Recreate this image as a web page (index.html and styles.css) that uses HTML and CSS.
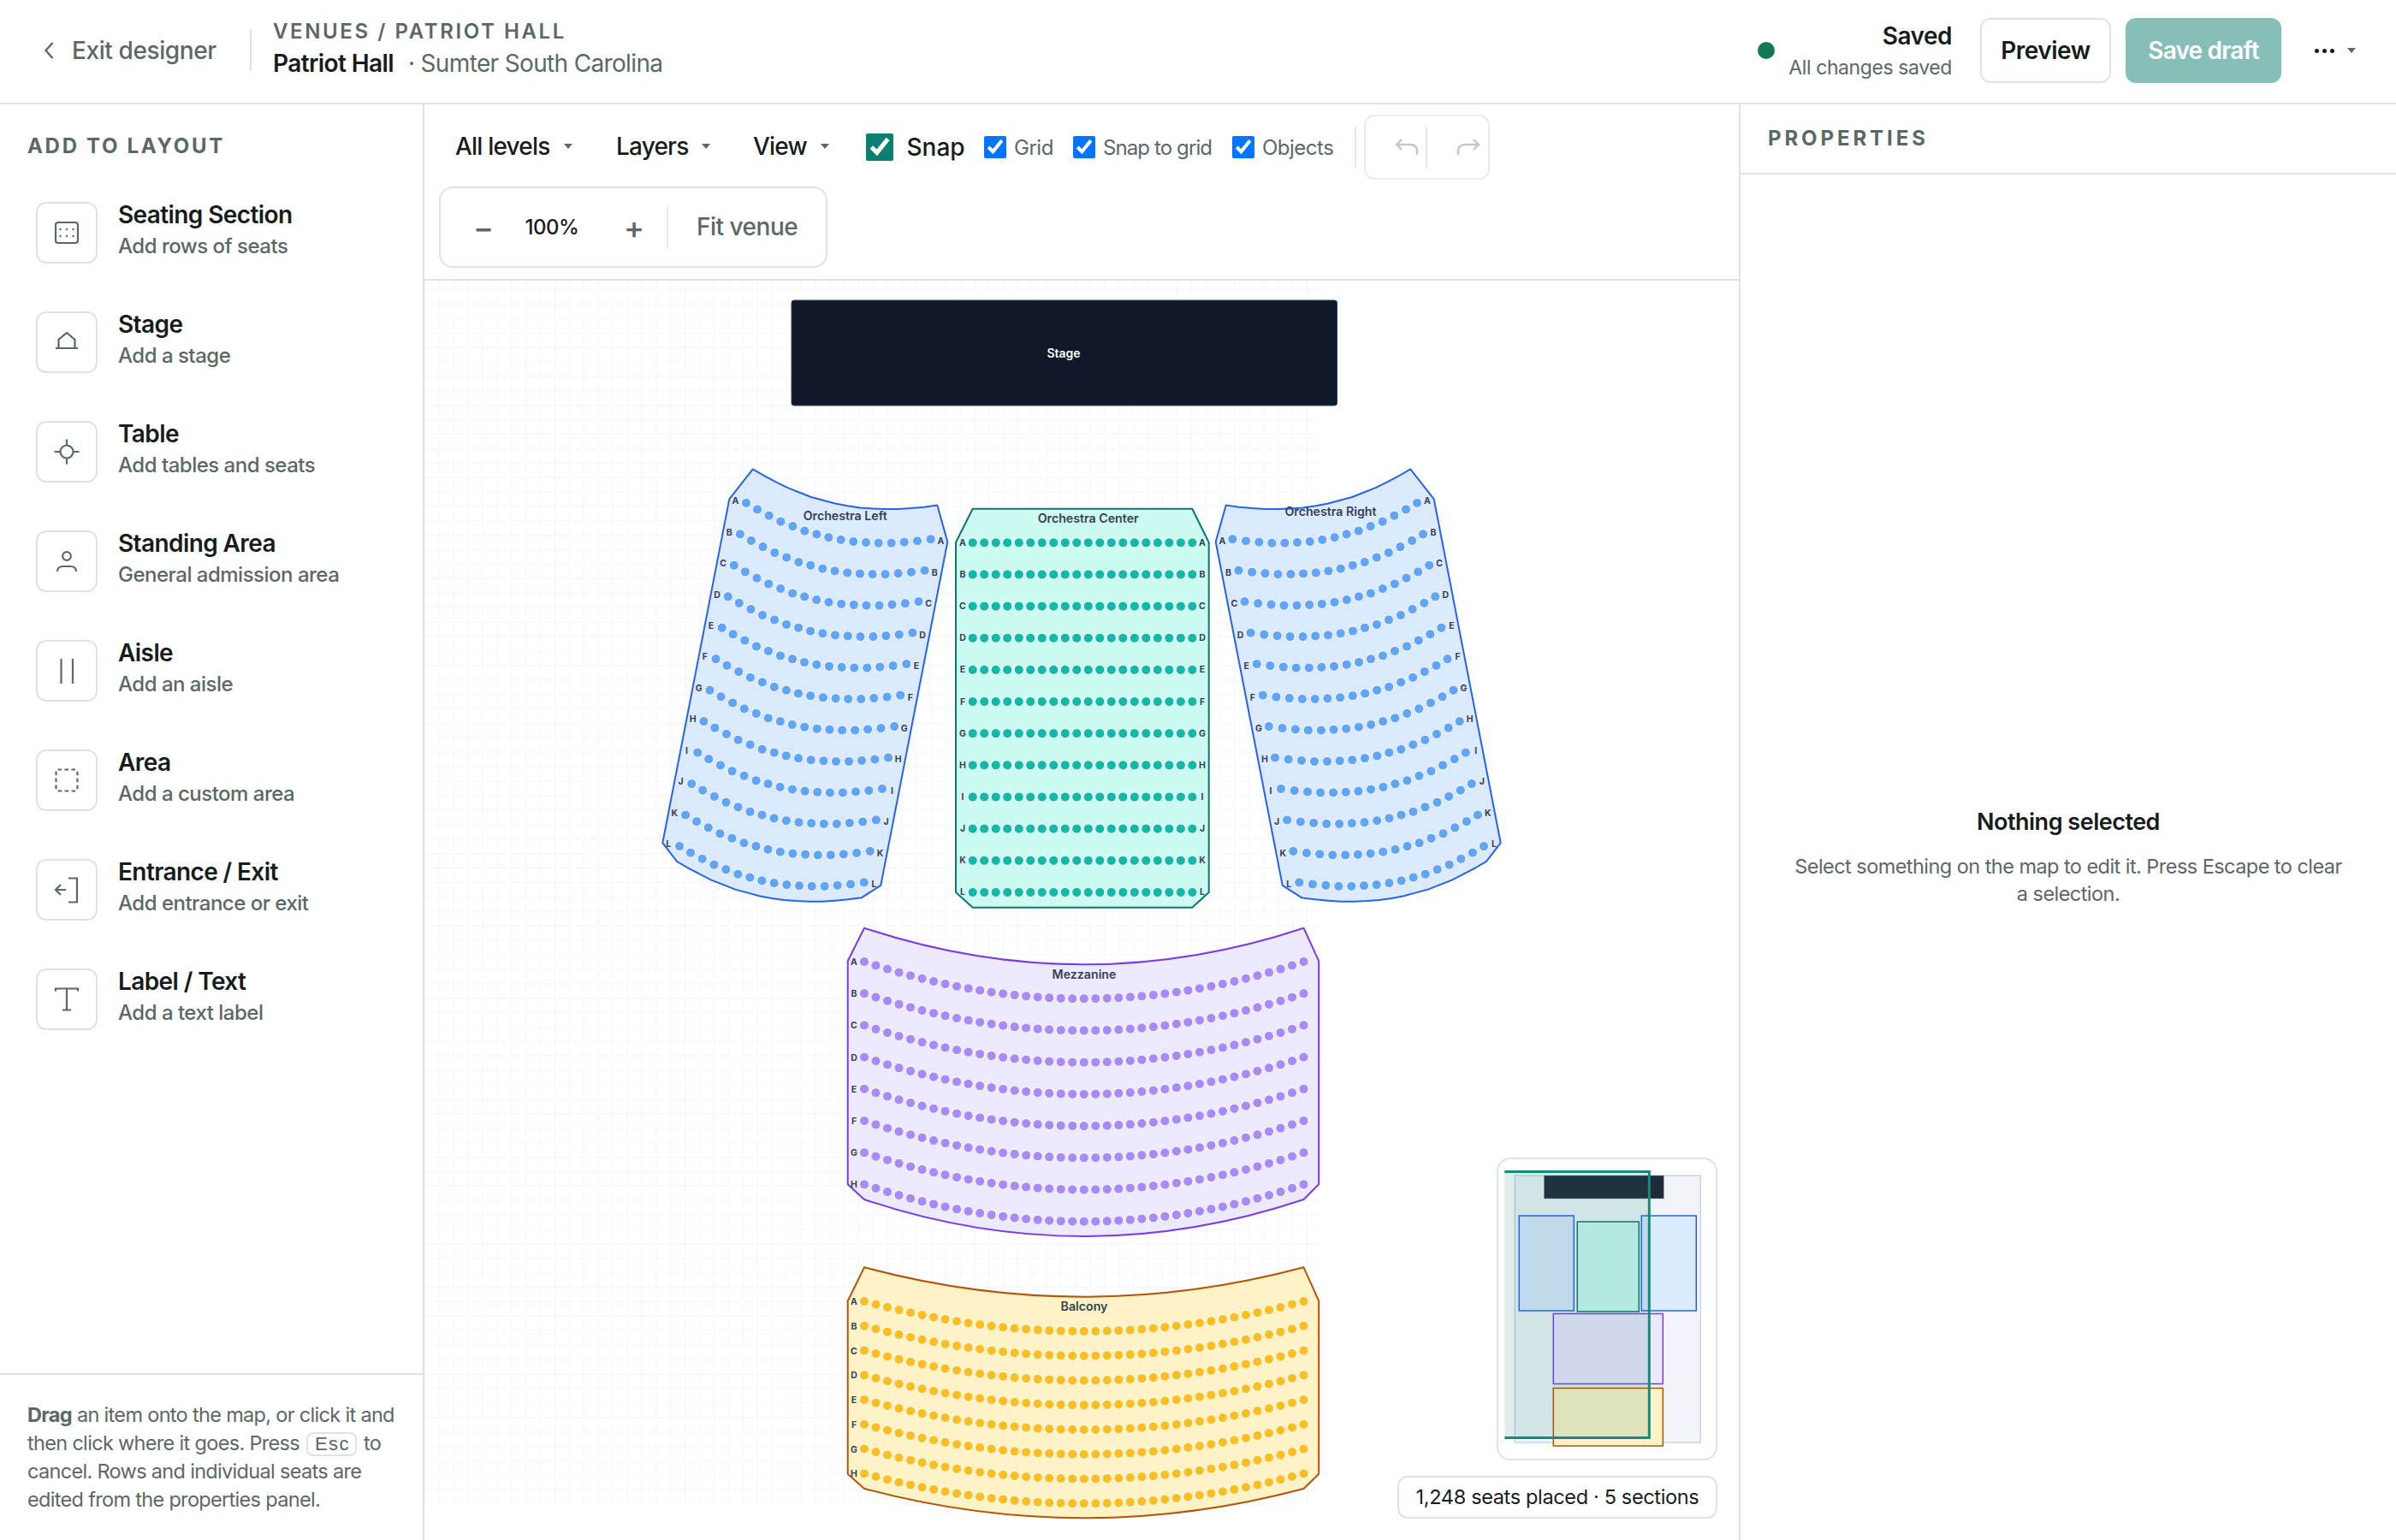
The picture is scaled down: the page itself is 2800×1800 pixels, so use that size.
FILE: index.html
```html
<!DOCTYPE html>
<html lang="en">
<head>
<meta charset="utf-8">
<title>Patriot Hall designer</title>
<link rel="stylesheet" href="styles.css">
</head>
<body>
<header class="topbar">
  <a class="exit">
    <svg class="chev" viewBox="0 0 14 24"><path d="M11.5 3L3.5 12L11.5 21"/></svg>
    <span>Exit designer</span>
  </a>
  <div class="crumbs">
    <div class="crumb-path">VENUES / PATRIOT HALL</div>
    <div class="crumb-name"><strong>Patriot Hall</strong><span class="place">· Sumter South Carolina</span></div>
  </div>
  <div class="top-right">
    <span class="dot"></span>
    <div class="status"><div class="status-main">Saved</div><div class="status-sub">All changes saved</div></div>
    <button class="btn btn-ghost">Preview</button>
    <button class="btn btn-save">Save draft</button>
    <div class="more"><span class="dots"><i></i><i></i><i></i></span><span class="caret"></span></div>
  </div>
</header>
<main class="body">
  <aside class="left">
    <h2 class="left-title">ADD TO LAYOUT</h2>
    <ul class="items">
      <li class="item"><span class="ico"><svg viewBox="0 0 36 36"><rect x="5" y="6" width="26" height="24" rx="3"/><g class="dotset"><circle cx="10.5" cy="14" r="1.2"/><circle cx="18" cy="14" r="1.2"/><circle cx="25.5" cy="14" r="1.2"/><circle cx="10.5" cy="22" r="1.2"/><circle cx="18" cy="22" r="1.2"/><circle cx="25.5" cy="22" r="1.2"/></g></svg></span><div><div class="it">Seating Section</div><div class="is">Add rows of seats</div></div></li>
      <li class="item"><span class="ico"><svg viewBox="0 0 36 36"><path d="M8.5 24.5V15L18 7L27.5 15V24.5M5 25H31"/></svg></span><div><div class="it">Stage</div><div class="is">Add a stage</div></div></li>
      <li class="item"><span class="ico"><svg viewBox="0 0 36 36"><circle cx="18" cy="18" r="7.5"/><path d="M18 3.5V10.5M18 25.5V32.5M3.5 18H10.5M25.5 18H32.5"/></svg></span><div><div class="it">Table</div><div class="is">Add tables and seats</div></div></li>
      <li class="item"><span class="ico"><svg viewBox="0 0 36 36"><circle cx="18" cy="12" r="4.8"/><path d="M7 30Q7 24 14 24H22Q29 24 29 30"/></svg></span><div><div class="it">Standing Area</div><div class="is">General admission area</div></div></li>
      <li class="item"><span class="ico"><svg viewBox="0 0 36 36"><path d="M11.5 4V33M25 4V33"/></svg></span><div><div class="it">Aisle</div><div class="is">Add an aisle</div></div></li>
      <li class="item"><span class="ico"><svg viewBox="0 0 36 36"><rect class="dash" x="5.5" y="5.5" width="25" height="25" rx="2"/></svg></span><div><div class="it">Area</div><div class="is">Add a custom area</div></div></li>
      <li class="item"><span class="ico"><svg viewBox="0 0 36 36"><path d="M20 4.5H30V32.5H20M17 18H5M11 12L5 18L11 24"/></svg></span><div><div class="it">Entrance / Exit</div><div class="is">Add entrance or exit</div></div></li>
      <li class="item"><span class="ico"><svg viewBox="0 0 36 36"><path d="M5 8.5V5.5H31V8.5M18 5.5V30.5M13 30.5H23"/></svg></span><div><div class="it">Label / Text</div><div class="is">Add a text label</div></div></li>
    </ul>
    <div class="hint"><b>Drag</b> an item onto the map, or click it and then click where it goes. Press <kbd>Esc</kbd> to cancel. Rows and individual seats are edited from the properties panel.</div>
  </aside>
  <section class="center">
    <div class="toolbar">
      <div class="tool-row">
        <button class="dd">All levels<span class="caret"></span></button>
        <button class="dd">Layers<span class="caret"></span></button>
        <button class="dd">View<span class="caret"></span></button>
        <label class="chk chk-main"><input type="checkbox" checked>Snap</label>
        <label class="chk"><input type="checkbox" checked>Grid</label>
        <label class="chk chk-tight"><input type="checkbox" checked>Snap to grid</label>
        <label class="chk"><input type="checkbox" checked>Objects</label>
        <span class="vsep"></span>
        <div class="hist">
          <button class="hist-btn"><svg viewBox="0 0 30 30"><path d="M9 6L3 12L9 18M3 12H18Q27 12 27 19V24"/></svg></button>
          <button class="hist-btn"><svg viewBox="0 0 30 30"><path d="M21 6L27 12L21 18M27 12H12Q3 12 3 19V24"/></svg></button>
        </div>
      </div>
      <div class="zoombox">
        <span class="zb zb-minus">−</span>
        <span class="zb-val">100%</span>
        <span class="zb zb-plus">+</span>
        <span class="zb-sep"></span>
        <span class="zb-fit">Fit venue</span>
      </div>
    </div>
    <div class="canvas">
      <svg id="map" class="map" viewBox="496 328 1536 1472" width="1536" height="1472">
        <defs>
          <pattern id="gridp" x="496" y="338" width="16.9" height="16.9" patternUnits="userSpaceOnUse">
            <path class="gridline" d="M0.5 0V16.9M0 0.5H16.9"/>
          </pattern>
        </defs>
        <rect class="gridfill" x="496" y="328" width="1045.5" height="1430"/>
        <g id="layer"></g>
      </svg>
      <svg class="minimap" viewBox="1751 1355 254 350" width="254" height="350">
        <rect class="m-bg" x="1770" y="1374" width="217" height="312"/>
        <rect class="m-stage" x="1804" y="1374" width="140" height="27"/>
        <rect class="m-blue" x="1775" y="1421" width="64" height="111"/>
        <rect class="m-teal" x="1843" y="1428" width="72" height="105"/>
        <rect class="m-blue" x="1918" y="1421" width="64" height="111"/>
        <rect class="m-purple" x="1815" y="1535.5" width="128" height="82"/>
        <rect class="m-amber" x="1815" y="1622.5" width="128" height="67.5"/>
        <rect class="m-view-fill" x="1758" y="1369.5" width="169" height="311"/>
        <path class="m-view" d="M1758 1369.5H1927V1680.5H1758"/>
      </svg>
      <div class="pill">1,248 seats placed · 5 sections</div>
    </div>
  </section>
  <aside class="right">
    <h2 class="right-title">PROPERTIES</h2>
    <div class="empty">
      <div class="empty-title">Nothing selected</div>
      <p class="empty-text">Select something on the map to edit it. Press Escape to clear a selection.</p>
    </div>
  </aside>
</main>
<script src="app.js"></script>
</body>
</html>
```
FILE: styles.css
```css
*{box-sizing:border-box}
html,body{margin:0;padding:0;height:100%}
body{width:2800px;height:1800px;overflow:hidden;background:#fff;color:#161c1c;font-family:Inter,"Liberation Sans",sans-serif;display:flex;flex-direction:column}
button{font:inherit;color:inherit;background:none;border:0;padding:0}
h2,p,ul{margin:0;padding:0}
li{list-style:none}

.topbar{height:122px;flex:none;border-bottom:2px solid #dfe3e3;display:flex;align-items:center;padding:0 30px 2px 50px}
.exit{display:flex;align-items:center;color:#5b6865;font-size:28px;font-weight:500;letter-spacing:-.4px;width:244px;height:48px;border-right:2px solid #dfe3e3}
.chev{width:14px;height:24px;margin-right:20px;fill:none;stroke:#5b6865;stroke-width:2.4}
.crumbs{margin:0 0 6px 25px}
.crumb-path{font-size:24px;font-weight:600;letter-spacing:2.6px;color:#5b6865;line-height:30px;margin-bottom:5px}
.crumb-name{font-size:28px;line-height:34px;letter-spacing:-.6px}
.crumb-name strong{font-weight:600}
.place{color:#5b6865;margin-left:17px;letter-spacing:-.65px}
.top-right{margin-left:auto;display:flex;align-items:center}
.dot{width:20px;height:20px;border-radius:50%;background:#0f7b56;margin-right:13px}
.status{text-align:right;margin-right:33px;width:194px;white-space:nowrap;padding-top:2px}
.status-main{font-size:28px;font-weight:600;line-height:38px;letter-spacing:-.5px}
.status-sub{font-size:23px;color:#5b6865;line-height:36px;letter-spacing:-.4px}
.btn{height:76px;border-radius:12px;font-size:28px;font-weight:600;letter-spacing:-.5px}
.btn-ghost{width:153px;border:2px solid #dfe3e3;background:#fff;margin-right:17px}
.btn-save{width:182px;background:#85bfb7;color:#fff;letter-spacing:-.8px}
.more{display:flex;align-items:center;margin-left:39px;width:65px}
.dots{display:flex;gap:4px}
.dots i{width:5px;height:5px;border-radius:50%;background:#161c1c}
.caret{display:inline-block;flex:none;width:0;height:0;border-left:5px solid transparent;border-right:5px solid transparent;border-top:6px solid #5b6865}
.more .caret{margin-left:15px}

.body{flex:1;display:flex;min-height:0}
.left{width:496px;flex:none;border-right:2px solid #dfe3e3;display:flex;flex-direction:column}
.left-title{font-size:24px;font-weight:700;letter-spacing:2.7px;color:#5b6865;padding:34px 0 0 32px;line-height:30px}
.items{padding:50px 0 0 42px;flex:1}
.item{display:flex;height:128px;gap:24px}
.ico{width:72px;height:72px;border:2px solid #dfe3e3;border-radius:12px;display:flex;align-items:center;justify-content:center}
.ico svg{width:36px;height:36px;fill:none;stroke:#5b6865;stroke-width:2.2}
.dotset circle{fill:#5b6865;stroke:none}
.dash{stroke-dasharray:4.5 3.5}
.it{font-size:28px;font-weight:600;line-height:34px;letter-spacing:-.6px;margin-top:-2px}
.is{font-size:24px;font-weight:500;color:#5b6865;line-height:36px;letter-spacing:-.5px;margin-top:2px}
.hint{border-top:2px solid #dfe3e3;height:195px;padding:29.5px 20px 0 32px;font-size:23.5px;line-height:33px;color:#5b6865;letter-spacing:-.68px}
.hint b{font-weight:700}
kbd{display:inline-block;font-family:"Liberation Sans",sans-serif;font-size:22px;letter-spacing:1.5px;line-height:24px;border:2px solid #dfe3e3;border-radius:8px;padding:0 6px 0 8px;margin:0 2px}

.center{width:1536px;flex:none;display:flex;flex-direction:column}
.toolbar{flex:none;height:206px;border-bottom:2px solid #dfe3e3;padding:12px 0 0 17px}
.tool-row{height:76px;display:grid;grid-template-columns:188px 160px 131.5px 138.5px 104px 186px 143px 10.6px 147px;align-items:center;margin-bottom:8px;padding-left:19px;white-space:nowrap}
.dd{display:flex;align-items:center;gap:16px;font-size:28px;font-weight:500;letter-spacing:-.8px;text-align:left;padding-bottom:3px}
.chk{display:flex;align-items:center;font-size:24px;color:#5b6865;letter-spacing:-.5px}
.chk-tight{letter-spacing:-.9px}
.chk input{width:26px;height:26px;margin:0 9px 0 0;flex:none}
.chk-main{font-size:28px;font-weight:500;color:#161c1c;letter-spacing:0}
.chk-main input{width:32px;height:32px;margin:0 16px 0 0;accent-color:#0b7f70}
.vsep{width:2px;height:48px;background:#e4e7e7}
.hist{display:flex;align-items:center;width:147px;height:76px;border:2px solid #e9ecec;border-radius:12px}
.hist-btn{flex:1;height:48px;display:flex;align-items:center;justify-content:center;padding-left:26px}
.hist-btn+.hist-btn{border-left:2px solid #e4e7e7}
.hist-btn svg{width:30px;height:30px;fill:none;stroke:#c3c7c7;stroke-width:2.4}
.zoombox{width:454px;height:95px;border:2px solid #dfe3e3;border-radius:16px;display:flex;align-items:center}
.zb{font-size:36px;color:#5b6865;width:30px;text-align:center;font-weight:500}
.zb-minus{margin-left:35px}
.zb-val{font-size:24px;font-weight:500;width:130px;text-align:center;letter-spacing:-.5px}
.zb-plus{margin-left:16px}
.zb-sep{width:2px;height:48px;background:#e4e7e7;margin-left:23px}
.zb-fit{font-size:28px;font-weight:500;color:#5b6865;margin-left:33px;letter-spacing:-.5px;padding-bottom:2px}

.canvas{flex:1;position:relative;overflow:hidden}
.map{position:absolute;left:0;top:0}
.gridfill{fill:url(#gridp)}
.gridline{fill:none;stroke:#f3f6fc;stroke-width:1}
.sec{stroke-width:2;stroke-linejoin:round}
.sec-blue{fill:#dbeafe;stroke:#2563eb}
.sec-teal{fill:#ccfbf1;stroke:#0f766e}
.sec-purple{fill:#ede9fe;stroke:#7c3aed}
.sec-amber{fill:#fef3c7;stroke:#b45309}
.seat{stroke:#fff;stroke-width:1}
.seat-blue{fill:#60a5fa}
.seat-teal{fill:#14b8a6}
.seat-purple{fill:#a78bfa}
.seat-amber{fill:#fbbf24}
.rowline{fill:none;stroke:#374151;stroke-width:.5;opacity:.15}
.stage{fill:#111827;stroke:#334155;stroke-width:1}
.stage-t{fill:#fff;font-size:14px;font-weight:600;text-anchor:middle;dominant-baseline:central}
.sec-title{fill:#374151;font-size:14.2px;font-weight:600;text-anchor:middle;dominant-baseline:central}
.row-l{fill:#374151;font-size:10.5px;font-weight:700;text-anchor:middle;dominant-baseline:central}

.minimap{position:absolute;left:1252.7px;top:1024.7px;width:258.6px;height:354px;background:#fff;border:2px solid #dfe3e3;border-radius:16px}
.m-bg{fill:#f1f5f9;stroke:#cbd5e1;stroke-width:1.5}
.m-stage{fill:#1f2937;stroke:#94a3b8;stroke-width:.5}
.m-blue{fill:#dbeafe;stroke:#2563eb;stroke-width:1.5}
.m-teal{fill:#ccfbf1;stroke:#0f766e;stroke-width:1.5}
.m-purple{fill:#ede9fe;stroke:#7c3aed;stroke-width:1.5}
.m-amber{fill:#fef3c7;stroke:#b45309;stroke-width:1.5}
.m-view-fill{fill:#0f766e;fill-opacity:.13}
.m-view{fill:none;stroke:#148c7d;stroke-width:3}
.pill{position:absolute;left:1136.7px;top:1396.7px;width:374.6px;height:50px;border:2px solid #dfe3e3;border-radius:12px;background:#fff;font-size:23.5px;line-height:46px;text-align:center;letter-spacing:-.35px;white-space:nowrap}

.right{width:768px;flex:none;border-left:2px solid #dfe3e3;display:flex;flex-direction:column}
.right-title{height:82px;border-bottom:2px solid #dfe3e3;font-size:24px;font-weight:700;letter-spacing:3.9px;color:#5b6865;padding:25px 0 0 32px;line-height:30px}
.empty{flex:1;display:flex;flex-direction:column;align-items:center;justify-content:center;text-align:center;padding:0 60px 0}
.empty-title{font-size:27px;font-weight:600;letter-spacing:-.5px;line-height:40px;margin-bottom:16px;margin-top:-3px}
.empty-text{font-size:23.5px;line-height:32px;color:#5b6865;letter-spacing:-.55px;max-width:645px}
```
FILE: app.js
```js
(function () {
  var NS = 'http://www.w3.org/2000/svg';
  var layer = document.getElementById('layer');
  var LETTERS = 'ABCDEFGHIJKL';

  function el(tag, attrs, text) {
    var n = document.createElementNS(NS, tag);
    for (var k in attrs) n.setAttribute(k, attrs[k]);
    if (text) n.textContent = text;
    layer.appendChild(n);
    return n;
  }
  function pts(list) {
    return list.map(function (p) { return p[0].toFixed(1) + ',' + p[1].toFixed(1); }).join(' ');
  }
  function seat(x, y, tone) { el('circle', { cx: x.toFixed(2), cy: y.toFixed(2), r: 5.6, 'class': 'seat seat-' + tone }); }
  function label(x, y, t) { el('text', { x: x.toFixed(1), y: y.toFixed(1), 'class': 'row-l' }, t); }
  function title(x, y, t) { el('text', { x: x, y: y, 'class': 'sec-title' }, t); }

  /* stage */
  el('rect', { x: 925, y: 351, width: 637.5, height: 123, rx: 3, 'class': 'stage' });
  el('text', { x: 1243, y: 412, 'class': 'stage-t' }, 'Stage');

  /* orchestra wings: measured row A of the left wing, other rows are translated copies */
  var rawX = [336, 375, 416, 457, 499, 541, 583, 625, 668, 712, 756, 800, 845, 890, 936, 983];
  var rawY = [168, 190, 211, 231, 247, 263, 274, 285, 293, 299, 302, 304, 304, 301, 297, 291];
  var rowA = rawX.map(function (x, i) { return [760 + x / 3, 530 + rawY[i] / 2.904]; });
  var DX = -7.09, DY = 36.47, MIRROR = 2528;

  function wing(mirror, titleX, titleY, name) {
    var map = function (p) { return mirror ? [MIRROR - p[0], p[1]] : p; };
    var top = rowA.map(function (p) { return [p[0] + 7.67, p[1] - 39.6]; });
    var bot = rowA.map(function (p) { return [p[0] + DX * 11 - 3, p[1] + DY * 11 + 17.9]; });
    var outline = top.concat([[1107.3, 633.3], [1029.3, 1034.8]], bot.slice().reverse(), [[774.3, 985.2], [852.3, 583.4]]);
    el('polygon', { points: pts(outline.map(map)), 'class': 'sec sec-blue' });
    for (var r = 0; r < 12; r++) {
      var row = rowA.map(function (p) { return map([p[0] + DX * r, p[1] + DY * r]); });
      el('polyline', { points: pts(row), 'class': 'rowline' });
      row.forEach(function (p) { seat(p[0], p[1], 'blue'); });
      /* row[0] is the outer, raised end of the wing; row[15] the inner end */
      var outerSide = mirror ? 12 : -12.7;
      var innerSide = mirror ? -12 : 11.7;
      label(row[0][0] + outerSide, row[0][1] - 2.3, LETTERS[r]);
      label(row[15][0] + innerSide, row[15][1] + 2.4, LETTERS[r]);
    }
    title(titleX, titleY, name);
  }
  wing(false, 987.7, 602, 'Orchestra Left');
  wing(true, 1555, 597.8, 'Orchestra Right');

  /* orchestra centre */
  el('polygon', { points: '1136.7,594.7 1393.3,594.7 1412.7,634 1412.7,1043 1393.3,1060.7 1136.7,1060.7 1117,1043 1117,634', 'class': 'sec sec-teal' });
  for (var r = 0; r < 12; r++) {
    var y = 634.3 + r * 37.15;
    for (var i = 0; i < 20; i++) seat(1136.7 + i * 13.507, y, 'teal');
    label(1125, y, LETTERS[r]);
    label(1405, y, LETTERS[r]);
  }
  title(1271.7, 605, 'Orchestra Center');

  /* curved blocks */
  function bowl(o) {
    var L = 1010, R = 1523.5, mid = (L + R) / 2, a = 990.7, b = 1541.2;
    var d = 'M' + L + ' ' + o.topY +
      ' Q' + mid + ' ' + (2 * o.topMid - o.topY) + ' ' + R + ' ' + o.topY +
      ' L' + b + ' ' + o.sideTop + ' L' + b + ' ' + o.sideBot + ' L' + R + ' ' + o.botY +
      ' Q' + mid + ' ' + (2 * o.botMid - o.botY) + ' ' + L + ' ' + o.botY +
      ' L' + a + ' ' + o.sideBot + ' L' + a + ' ' + o.sideTop + ' Z';
    el('path', { d: d, 'class': 'sec sec-' + o.tone });
    for (var r = 0; r < 8; r++) {
      var y0 = o.y0 + r * o.pitch, row = [];
      for (var i = 0; i < 39; i++) {
        var t = i / 38;
        row.push([L + i * 13.513, y0 + o.depth * 4 * t * (1 - t)]);
      }
      el('polyline', { points: pts(row), 'class': 'rowline' });
      row.forEach(function (p) { seat(p[0], p[1], o.tone); });
      label(998, y0 + .5, LETTERS[r]);
    }
    title(1267, o.titleY, o.name);
  }
  bowl({ tone: 'purple', name: 'Mezzanine', topY: 1084.7, topMid: 1127.3, sideTop: 1123.3, sideBot: 1384.3, botY: 1402, botMid: 1445, y0: 1124, pitch: 37.2, depth: 43.3, titleY: 1138 });
  bowl({ tone: 'amber', name: 'Balcony', topY: 1481.3, topMid: 1515.7, sideTop: 1520.7, sideBot: 1722.7, botY: 1740, botMid: 1774.3, y0: 1521, pitch: 28.76, depth: 35, titleY: 1526 });
})();
```
